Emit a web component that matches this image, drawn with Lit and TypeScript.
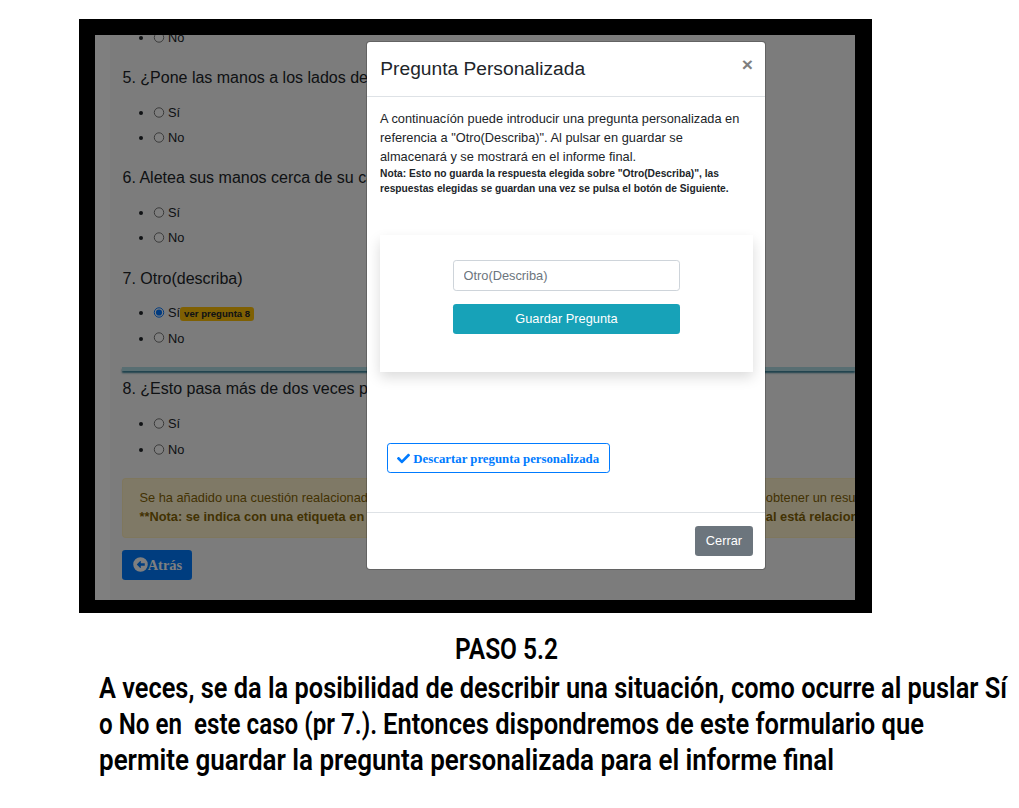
import { LitElement, html, css, svg } from "lit";
import { customElement, property } from "lit/decorators.js";

interface Question {
  title: string;
  checked?: boolean;
  tag?: string;
}

@customElement("radio-option")
class RadioOption extends LitElement {
  @property() label = "";
  @property() tag = "";
  @property({ type: Boolean }) checked = false;
  static styles = css`
    :host { display: flex; align-items: center; height: 19px; color: #212529; }
    .bullet { width: 4px; height: 4px; border-radius: 50%; background: #212529; margin: 1px 10px 0 17px; }
    svg { width: 12px; height: 12px; margin-right: 3px; flex: none; }
    .tag { background: #ffc107; border-radius: 3px; font-weight: 700; font-size: 9.6px; line-height: 14px; padding: 0 4px; margin-top: 3px; }
  `;
  render() {
    return html`<span class="bullet"></span>
      <svg viewBox="0 0 12 12">
        ${this.checked
          ? svg`<circle cx="6" cy="5.5" r="4.7" fill="#fff" stroke="#0075ff"/><circle cx="6" cy="5.5" r="3.1" fill="#0075ff"/>`
          : svg`<circle cx="6" cy="5.5" r="4.7" fill="#fff" stroke="#767676"/>`}
      </svg><span>${this.label}</span>${this.tag ? html`<span class="tag">${this.tag}</span>` : ""}`;
  }
}

@customElement("app-root")
class AppRoot extends LitElement {
  static styles = css`
    * { box-sizing: border-box; }
    :host { display: block; box-sizing: border-box; width: 1019px; height: 808px; overflow: hidden; background: #fff; padding: 19px 0 0 79px;
      font: 12.8px/19.2px "Liberation Sans", Arial, sans-serif; color: #212529; }
    .frame { position: relative; width: 793px; height: 594px; border: solid #000; border-width: 16px 17px 13px 16px; overflow: hidden; }
    .page { height: 565px; background: #f8f8f8; border-left: 15px solid #fff; padding-left: 12px; overflow: hidden; }
    .first { margin-top: -7px; }
    .question { padding-top: 21px; }
    .question h5 { margin: 0 0 15.8px; padding-left: 0.5px; font-size: 16px; line-height: 19.2px; font-weight: 400; white-space: nowrap; }
    .question radio-option + radio-option { margin-top: 6px; }
    .question.tagged { padding-top: 22.2px; }
    .question.tagged h5 { margin-bottom: 14.8px; }
    .question.tagged radio-option + radio-option { margin-top: 6.8px; }
    .rule { height: 4px; margin-top: 18.8px; background: #b0dce4; box-shadow: 0 2px 2px #3a8299; }
    .rule + .question { padding-top: 8.6px; }
    .rule + .question radio-option + radio-option { margin-top: 7px; }
    .alert { margin-top: 18.4px; height: 60px; padding: 9px 0 0 16.5px; background: #fff3cd; border: 1px solid #ffeeba; border-right: 0; border-radius: 4px 0 0 4px; color: #856404; white-space: nowrap; overflow: hidden; }
    .line { display: flex; }
    .lead { width: 626.3px; flex: none; }
    .line.strong { font-weight: 700; }
    .btn { display: flex; align-items: center; justify-content: center; height: 30px; border-radius: 3.2px; border: 0; padding: 0; margin: 0; font: inherit; color: #fff; }
    .back { width: 70px; margin-top: 12px; padding: 1px 0 0 0.8px; background: #007bff; font: 700 14.4px "Liberation Serif", serif; }
    .back svg { width: 15px; height: 15px; margin-top: -1px; }
    .backdrop { position: absolute; inset: 0; background: rgba(0, 0, 0, 0.5); }
    .modal { position: absolute; left: 271px; top: 6px; width: 400px; height: 529px; background: #fff; background-clip: padding-box; border: 1px solid rgba(0, 0, 0, 0.2); border-radius: 4px; display: flex; flex-direction: column; }
    .header { height: 55px; flex: none; border-bottom: 1px solid #dee2e6; padding: 12px 12px 0 13px; display: flex; justify-content: space-between; }
    .title { font-size: 19.2px; line-height: 29px; padding-left: 0.3px; }
    .close { font-size: 19.2px; line-height: 22px; font-weight: 700; color: #7f7f7f; }
    .body { flex: 1; padding: 12px 12px 0 13px; display: flex; flex-direction: column; }
    .note { margin-top: -0.8px; font-size: 10.24px; line-height: 15.2px; font-weight: 700; white-space: nowrap; }
    .text { white-space: nowrap; }
    .card { margin-top: 39.2px; height: 137px; padding: 25px 73px 0; box-shadow: 0 6.4px 12.8px rgba(0, 0, 0, 0.15); }
    .field { display: block; width: 227px; height: 31px; margin: 0 0 13px; border: 1px solid #ced4da; border-radius: 3.2px; padding: 0 9.5px; font: inherit; background: #fff; }
    .field::placeholder { color: #6c757d; opacity: 1; }
    .save { width: 227px; padding-bottom: 1px; background: #17a2b8; }
    .discard { width: 223px; margin: 71px 0 0 7px; padding-top: 2px; background: #fff; border: 1px solid #007bff; color: #007bff; font: 700 12.8px "Liberation Serif", serif; white-space: nowrap; }
    .discard svg { width: 13px; height: 13px; margin: -1px 3px 0 -0.6px; }
    .footer { height: 57px; flex: none; border-top: 1px solid #dee2e6; padding: 13px 12px 0; display: flex; justify-content: flex-end; }
    .cancel { width: 58px; background: #6c757d; }
    .caption { display: block; width: 940px; height: 170px; margin-top: 13px; font: 600 29px Roboto, sans-serif; fill: #000; }
  `;

  private questions: Question[] = [
    { title: "5. ¿Pone las manos a los lados de" },
    { title: "6. Aletea sus manos cerca de su ca" },
    { title: "7. Otro(describa)", checked: true, tag: "ver pregunta 8" },
  ];

  private question(q: Question) {
    return html`<div class="question ${q.tag ? "tagged" : ""}"><h5>${q.title}</h5>
      <radio-option label="Sí" ?checked=${q.checked} tag=${q.tag ?? ""}></radio-option>
      <radio-option label="No"></radio-option></div>`;
  }

  render() {
    return html`
      <div class="frame">
        <div class="page">
          <radio-option class="first" label="No"></radio-option>
          ${this.questions.map((q) => this.question(q))}
          <div class="rule"></div>
          ${this.question({ title: "8. ¿Esto pasa más de dos veces p" })}
          <div class="alert">
            <div class="line"><span class="lead">Se ha añadido una cuestión realacionada</span><span>obtener un resultado</span></div>
            <div class="line strong"><span class="lead">**Nota: se indica con una etiqueta en</span><span>al está relacionada</span></div>
          </div>
          <button class="btn back"><svg viewBox="0 0 512 512"><path fill="#fff" fill-rule="evenodd" d="M256 8a248 248 0 1 1 0 496a248 248 0 0 1 0-496zM390 212H266v-65c0-10-12-16-20-9L136 245c-6 6-6 16 0 22l110 107c8 7 20 1 20-9v-65h124c7 0 12-5 12-12v-64c0-7-5-12-12-12z"/></svg>Atrás</button>
        </div>
        <div class="backdrop"></div>
        <div class="modal">
          <div class="header"><span class="title">Pregunta Personalizada</span><span class="close">×</span></div>
          <div class="body">
            <div class="text">A continuacíón puede introducir una pregunta personalizada en<br />referencia a "Otro(Describa)". Al pulsar en guardar se<br />almacenará y se mostrará en el informe final.</div>
            <div class="note">Nota: Esto no guarda la respuesta elegida sobre "Otro(Describa)", las<br />respuestas elegidas se guardan una vez se pulsa el botón de Siguiente.</div>
            <div class="card">
              <input class="field" placeholder="Otro(Describa)" />
              <button class="btn save">Guardar Pregunta</button>
            </div>
            <button class="btn discard"><svg viewBox="0 0 512 512"><path fill="#007bff" d="M173.9 439.4l-166.4-166.4c-10-10-10-26.2 0-36.2l36.2-36.2c10-10 26.2-10 36.2 0L192 312.7 432.1 72.6c10-10 26.2-10 36.2 0l36.2 36.2c10 10 10 26.2 0 36.2L210.1 439.4c-10 10-26.2 10-36.2 0z"/></svg>Descartar pregunta personalizada</button>
          </div>
          <div class="footer"><button class="btn cancel">Cerrar</button></div>
        </div>
      </div>
      <svg class="caption" viewBox="0 0 940 170">
        <text x="376" y="33" textLength="103" lengthAdjust="spacingAndGlyphs">PASO 5.2</text>
        <text x="20" y="72" textLength="908" lengthAdjust="spacingAndGlyphs">A veces, se da la posibilidad de describir una situación, como ocurre al puslar Sí</text>
        <text x="20" y="108" textLength="278" lengthAdjust="spacingAndGlyphs">o No en&nbsp; este caso (pr 7.).</text>
        <text x="304" y="108" textLength="541" lengthAdjust="spacingAndGlyphs">Entonces dispondremos de este formulario que</text>
        <text x="20" y="144" textLength="735" lengthAdjust="spacingAndGlyphs">permite guardar la pregunta personalizada para el informe final</text>
      </svg>`;
  }
}
